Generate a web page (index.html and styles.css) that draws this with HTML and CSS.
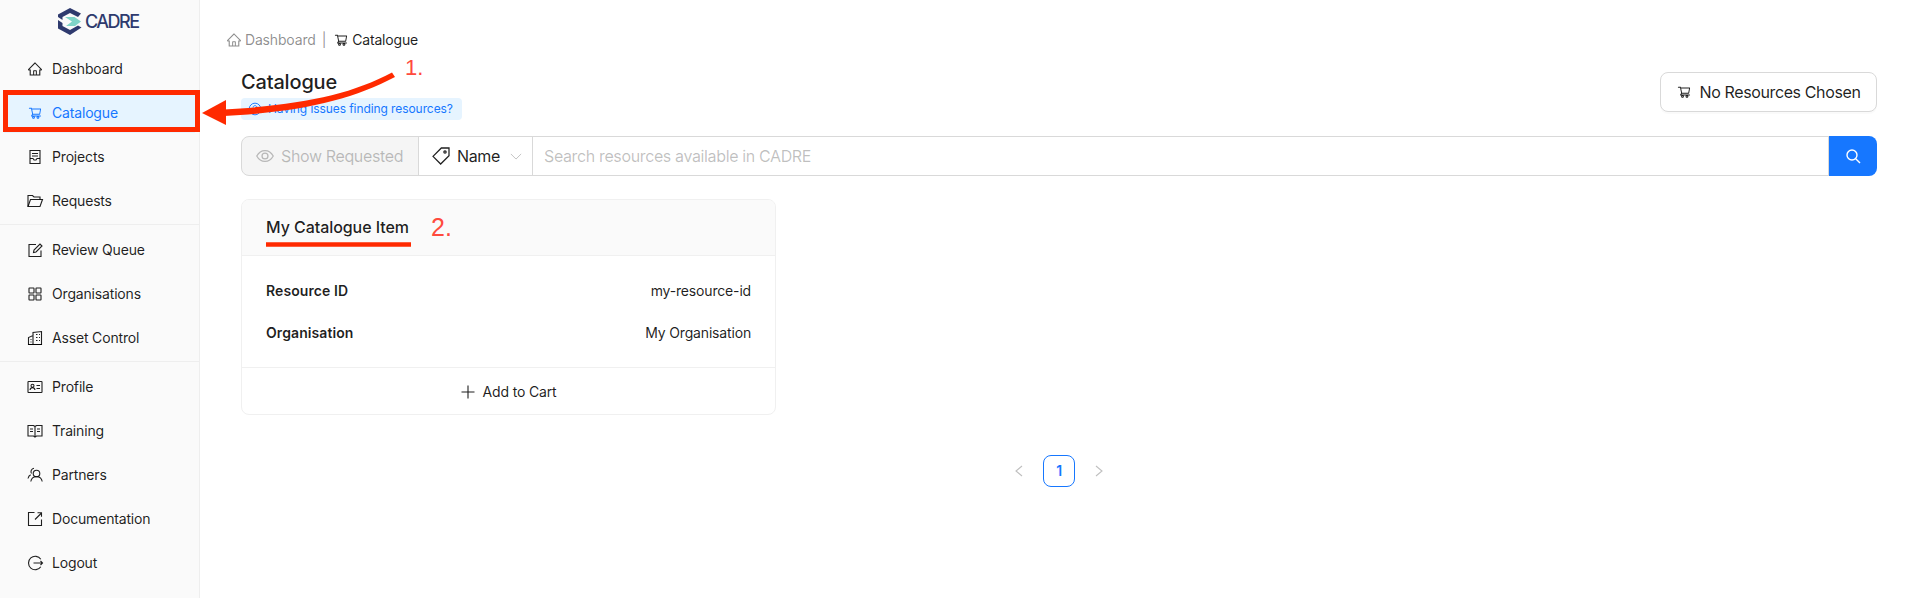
FILE: index.html
```html
<!DOCTYPE html>
<html lang="en">
<head>
<meta charset="utf-8">
<title>Catalogue - CADRE</title>
<link rel="stylesheet" href="styles.css">
</head>
<body>
<svg class="defs" width="0" height="0" aria-hidden="true">
  <symbol id="i-home" viewBox="58 58 908 908"><path fill="currentColor" d="M946.5 505L560.1 118.8l-25.9-25.9a31.5 31.5 0 0 0-44.4 0L77.5 505a63.9 63.9 0 0 0-18.8 46c.4 35.2 29.7 63.3 64.9 63.3h42.5V940h691.8V614.3h43.4c17.1 0 33.2-6.7 45.3-18.8a63.6 63.6 0 0 0 18.7-45.3c0-17-6.7-33.1-18.8-45.2zM568 868H456V664h112v204zm217.9-325.7V868H632V640c0-22.1-17.9-40-40-40H432c-22.1 0-40 17.9-40 40v228H238.1V542.3h-96l370-369.7 23.1 23.1L882 542.3h-96.1z"/></symbol>
  <symbol id="i-cart" viewBox="0 0 1024 1024"><path fill="currentColor" d="M922.9 701.9H327.4l29.9-60.9 496.8-.9c16.8 0 31.2-12 34.2-28.6l68.8-385.1c1.8-10.1-.9-20.5-7.5-28.4a34.99 34.99 0 0 0-26.6-12.5l-632-2.1-5.4-25.4c-3.4-16.2-18-28-34.6-28H96.5a35.3 35.3 0 1 0 0 70.6h125.9L246 312.8l58.1 281.3-74.8 122.1a34.96 34.96 0 0 0-3 36.8c6 11.9 18.1 19.4 31.5 19.4h62.8a102.43 102.43 0 0 0-20.6 61.7c0 56.6 46 102.6 102.6 102.6s102.6-46 102.6-102.6c0-22.3-7.4-44-20.6-61.7h161.1a102.43 102.43 0 0 0-20.6 61.7c0 56.6 46 102.6 102.6 102.6s102.6-46 102.6-102.6c0-22.3-7.4-44-20.6-61.7H923c19.4 0 35.3-15.8 35.3-35.3a35.42 35.42 0 0 0-35.4-35.2zM305.7 253l575.8 1.9-56.4 315.8-452.3.8L305.7 253zm96.9 612.7c-17.4 0-31.6-14.2-31.6-31.6 0-17.4 14.2-31.6 31.6-31.6s31.6 14.2 31.6 31.6a31.6 31.6 0 0 1-31.6 31.6zm325.1 0c-17.4 0-31.6-14.2-31.6-31.6 0-17.4 14.2-31.6 31.6-31.6s31.6 14.2 31.6 31.6a31.6 31.6 0 0 1-31.6 31.6z"/></symbol>
  <symbol id="i-project" viewBox="1 1 14 14"><g class="st"><path d="M3 1.500h10v13H3z"/><path d="M5 4.500h6M5 7h6M3 9.500h3l1 1.500h2l1-1.500h3"/></g></symbol>
  <symbol id="i-folder" viewBox="1 1 14 14"><g class="st"><path d="M1 13.500v-11h4.500l1.500 1.500h6v2.500"/><path d="M1 13.500l2.500-7H15.500L13 13.500z"/></g></symbol>
  <symbol id="i-edit" viewBox="1 1 14 14"><g class="st"><path d="M14 8.500v6H2v-12h7"/><path d="M6.500 10.500l.5-2.500 6-6 2 2-6 6z"/></g></symbol>
  <symbol id="i-grid" viewBox="1 1 14 14"><g class="st"><rect x="2" y="2" width="5" height="5" rx=".4"/><rect x="9" y="2" width="5" height="5" rx=".4"/><rect x="2" y="9" width="5" height="5" rx=".4"/><rect x="9" y="9" width="5" height="5" rx=".4"/></g></symbol>
  <symbol id="i-asset" viewBox="1 1 14 14"><g class="st"><path d="M1.500 14.500V7.500L6 5.500v9zM6 14.500V2.500l8.500-1v13z"/><path d="M1 14.500h14M3.500 9.500h1M3.500 12h1M9 4.500h1.500M12 4.500h1M9 7.500h1.500M12 7.500h1M9 10.500h1.500M12 10.500h1"/></g></symbol>
  <symbol id="i-profile" viewBox="1 1 14 14"><g class="st"><rect x="1" y="2.500" width="14" height="11" rx=".6"/><circle cx="5.500" cy="6.800" r="1.500"/><path d="M3 11c.3-1.600 1.200-2.400 2.500-2.400S7.700 9.400 8 11M9.500 6.500h3.500M9.500 9.500h3.500"/></g></symbol>
  <symbol id="i-book" viewBox="1 1 14 14"><g class="st"><path d="M1 2.500h5.500L8 3.500l1.500-1H15v10.500H9.500L8 14l-1.500-1H1zM8 3.500V14"/><path d="M3 6h3M3 8.500h3M10 6h3M10 8.500h3"/></g></symbol>
  <symbol id="i-partners" viewBox="1 1 14 14"><g class="st"><circle cx="9.500" cy="6.500" r="3.300"/><path d="M3.800 14.500c.5-3.200 2.700-4.800 5.700-4.800s5.200 1.600 5.700 4.800"/><path d="M4.500 6.500A3.400 3.400 0 0 1 7 1.300M1 11.500c.4-1.800 1.300-3 2.700-3.700"/></g></symbol>
  <symbol id="i-export" viewBox="1 1 14 14"><g class="st"><path d="M14.500 8.500v6h-13v-13h6"/><path d="M8 8.500L14 2.500M10.500 1.800h4v4"/></g></symbol>
  <symbol id="i-logout" viewBox="1 1 14 14"><g class="st"><path d="M13.800 4.300A6.700 6.700 0 1 0 13.800 11.700"/><path d="M6.500 8h9M13.500 6l2 2-2 2"/></g></symbol>
  <symbol id="i-help" viewBox="1 1 14 14"><g class="st"><circle cx="8" cy="8" r="6.800"/><path d="M5.800 6.200c0-1.300 1-2.100 2.200-2.100s2.200.8 2.200 2c0 1.900-2.200 1.700-2.200 3.500M8 11v1.100"/></g></symbol>
  <symbol id="i-eye" viewBox="1 1 14 14"><g class="st"><path d="M.8 8C2.500 4.800 5 3.200 8 3.200s5.500 1.600 7.200 4.800c-1.700 3.200-4.200 4.800-7.200 4.800S2.500 11.200.8 8z"/><circle cx="8" cy="8" r="2.600"/></g></symbol>
  <symbol id="i-tag" viewBox="1 1 14 14"><g class="st"><path d="M1 8.300L8.300 1H15v6.700L7.700 15z"/><circle cx="11.500" cy="4.500" r="1"/></g></symbol>
  <symbol id="i-down" viewBox="1 3 14 10"><path class="st" d="M2 5l6 6 6-6"/></symbol>
  <symbol id="i-search" viewBox="1 1 14 14"><g class="st st-heavy"><circle cx="7" cy="7" r="5"/><path d="M10.700 10.700L15 15"/></g></symbol>
  <symbol id="i-plus" viewBox="1 1 14 14"><path class="st" d="M8 1.500v13M1.500 8h13"/></symbol>
  <symbol id="i-left" viewBox="0 0 12 12"><path class="st" d="M9 1L3 6l6 5"/></symbol>
  <symbol id="i-right" viewBox="0 0 12 12"><path class="st" d="M3 1l6 5-6 5"/></symbol>
</svg>

<div class="app">
  <aside class="sidebar">
    <div class="brand">
      <svg class="brand-mark" viewBox="0 0 24 27">
        <path class="navy" d="M12 0L23 5.500 20 9 12 5 4.500 9v3L0 9V6.500z"/>
        <path class="navy" d="M0 12l4.500 3v3L12 22l8-4.500 3.500 2L12 27 0 20.500z"/>
        <path class="teal" d="M7 9h9.500L23 13.500 17 18H8l6-4.500z"/>
      </svg>
      <span class="brand-name">CADRE</span>
    </div>
    <nav class="menu">
      <div class="group">
        <a class="item"><svg class="ico"><use href="#i-home"/></svg>Dashboard</a>
        <a class="item item-active"><svg class="ico"><use href="#i-cart"/></svg>Catalogue</a>
        <a class="item"><svg class="ico"><use href="#i-project"/></svg>Projects</a>
        <a class="item"><svg class="ico"><use href="#i-folder"/></svg>Requests</a>
      </div>
      <div class="divider"></div>
      <div class="group">
        <a class="item"><svg class="ico"><use href="#i-edit"/></svg>Review Queue</a>
        <a class="item"><svg class="ico"><use href="#i-grid"/></svg>Organisations</a>
        <a class="item"><svg class="ico"><use href="#i-asset"/></svg>Asset Control</a>
      </div>
      <div class="divider"></div>
      <div class="group">
        <a class="item"><svg class="ico"><use href="#i-profile"/></svg>Profile</a>
        <a class="item"><svg class="ico"><use href="#i-book"/></svg>Training</a>
        <a class="item"><svg class="ico"><use href="#i-partners"/></svg>Partners</a>
        <a class="item"><svg class="ico"><use href="#i-export"/></svg>Documentation</a>
        <a class="item"><svg class="ico"><use href="#i-logout"/></svg>Logout</a>
      </div>
    </nav>
  </aside>

  <main class="main">
    <div class="crumbs">
      <span class="crumb crumb-muted"><svg class="ico"><use href="#i-home"/></svg>Dashboard</span>
      <span class="crumb-sep">|</span>
      <span class="crumb"><svg class="ico"><use href="#i-cart"/></svg>Catalogue</span>
    </div>
    <div class="content">
      <header class="head">
        <div class="head-left">
          <h1 class="title">Catalogue</h1>
          <span class="help"><svg class="ico ico-help"><use href="#i-help"/></svg>Having issues finding resources?</span>
        </div>
        <button class="cart-btn"><svg class="ico"><use href="#i-cart"/></svg>No Resources Chosen</button>
      </header>

      <div class="search">
        <div class="seg seg-show"><svg class="ico ico-lg"><use href="#i-eye"/></svg>Show Requested</div>
        <div class="seg seg-name"><svg class="ico ico-lg"><use href="#i-tag"/></svg>Name<svg class="ico ico-chev"><use href="#i-down"/></svg></div>
        <input class="seg-input" type="text" placeholder="Search resources available in CADRE">
        <button class="seg-go"><svg class="ico"><use href="#i-search"/></svg></button>
      </div>

      <article class="card">
        <div class="card-head">My Catalogue Item</div>
        <div class="card-body">
          <div class="row"><span class="row-key">Resource ID</span><span class="row-val">my-resource-id</span></div>
          <div class="row"><span class="row-key">Organisation</span><span class="row-val">My Organisation</span></div>
        </div>
        <div class="card-foot"><svg class="ico"><use href="#i-plus"/></svg>Add to Cart</div>
      </article>

      <div class="pager">
        <span class="pg pg-arrow"><svg class="ico-pg"><use href="#i-left"/></svg></span>
        <span class="pg pg-on">1</span>
        <span class="pg pg-arrow"><svg class="ico-pg"><use href="#i-right"/></svg></span>
      </div>
    </div>
  </main>
</div>

<svg class="marks" width="1919" height="598" viewBox="0 0 1919 598" aria-hidden="true">
  <rect class="mark-box" x="5.500" y="92.500" width="192" height="37"/>
  <path class="mark-head" d="M392 72.500C350 95 300 105 224 109.500V116C300 112 352 100 395 77z"/>
  <path class="mark-head" d="M202 113L226 100V125z"/>
  <path class="mark-under" d="M266 244.500H411"/>
</svg>
<span class="note note-1">1.</span>
<span class="note note-2">2.</span>
</body>
</html>
```
FILE: styles.css
```css
* { box-sizing: border-box; }
html, body { margin: 0; height: 100%; overflow: hidden; }
body {
  position: relative;
  background: #fff;
  color: rgba(0, 0, 0, .88);
  font-family: Inter, "Liberation Sans", sans-serif;
  font-size: 14px;
  line-height: 22px;
  letter-spacing: -.17px;
}
.defs { position: absolute; }
symbol { overflow: visible; }
.st { fill: none; stroke: currentColor; stroke-width: 1.1; }
.st-heavy { stroke-width: 1.4; }
.ico { width: 14px; height: 14px; flex: none; overflow: visible; }
.ico-lg { width: 16px; height: 16px; }

.app { display: flex; height: 598px; }

.sidebar {
  width: 200px;
  flex: none;
  background: #fafafa;
  border-right: 1px solid #eee;
}
.brand {
  height: 49px;
  padding: 8px 0 0 58px;
  display: flex;
  align-items: flex-start;
  gap: 3px;
}
.brand-mark { width: 24px; height: 27px; flex: none; }
.navy { fill: #2e3a6e; }
.teal { fill: #7fd4c8; }
.brand-name {
  color: #2e3a6e;
  font-size: 18px;
  line-height: 27px;
  letter-spacing: -1.5px;
  font-weight: 500;
}
.group { display: flex; flex-direction: column; gap: 4px; }
.divider { height: 1px; background: #eee; margin: 3px 0 5px; }
.item {
  height: 40px;
  margin: 0 4px;
  padding-left: 24px;
  display: flex;
  align-items: center;
  gap: 10px;
  color: rgba(0, 0, 0, .88);
}
.item-active { background: #e6f4ff; color: #1677ff; }

.main { flex: 1; min-width: 0; padding: 29px 28px 0 27px; }
.crumbs { display: flex; align-items: center; height: 22px; color: rgba(0, 0, 0, .88); }
.crumb { display: flex; align-items: center; gap: 4px; }
.crumb-muted { color: rgba(0, 0, 0, .45); }
.crumb-sep { margin: 0 8px 0 6px; color: rgba(0, 0, 0, .45); }
.content { padding: 0 0 0 14px; margin-right: 14px; }

.head { display: flex; justify-content: space-between; align-items: flex-start; margin-top: 17px; }
.head-left { display: flex; flex-direction: column; align-items: flex-start; }
.title { margin: 0; font-size: 20px; line-height: 28px; font-weight: 500; }
.help {
  margin-top: 2px;
  height: 22px;
  width: 221px;
  padding-left: 8px;
  display: flex;
  align-items: center;
  gap: 7px;
  background: #e6f4ff;
  border-radius: 4px;
  color: #1677ff;
  font-size: 12px;
  letter-spacing: -.08px;
}
.ico-help { width: 12px; height: 12px; }
.cart-btn {
  margin-top: 4px;
  width: 217px;
  height: 40px;
  display: flex;
  align-items: center;
  justify-content: center;
  gap: 9px;
  background: #fff;
  border: 1px solid #d9d9d9;
  border-radius: 8px;
  box-shadow: 0 2px 0 rgba(0, 0, 0, .02);
  color: rgba(0, 0, 0, .88);
  font: inherit;
  font-size: 16px;
  letter-spacing: -.38px;
}

.search { display: flex; height: 40px; margin-top: 16px; font-size: 16px; letter-spacing: -.37px; }
.seg { display: flex; align-items: center; height: 40px; border: 1px solid #d9d9d9; }
.seg-show {
  width: 178px;
  padding-left: 15px;
  gap: 8px;
  background: #f5f5f5;
  color: rgba(0, 0, 0, .25);
  border-radius: 8px 0 0 8px;
}
.seg-name { width: 115px; margin-left: -1px; padding-left: 14px; gap: 8px; }
.ico-chev { width: 12px; height: 9px; margin-left: 2px; color: rgba(0, 0, 0, .25); }
.seg-input {
  flex: 1;
  min-width: 0;
  height: 40px;
  margin-left: -1px;
  padding: 0 11px;
  border: 1px solid #d9d9d9;
  outline: 0;
  font: inherit;
  letter-spacing: inherit;
}
.seg-input::placeholder { color: rgba(0, 0, 0, .25); }
.seg-go {
  width: 48px;
  height: 40px;
  flex: none;
  display: flex;
  align-items: center;
  justify-content: center;
  background: #1677ff;
  border: 0;
  border-radius: 0 8px 8px 0;
  color: #fff;
}

.card {
  width: 535px;
  margin-top: 23px;
  border: 1px solid #f0f0f0;
  border-radius: 8px;
  overflow: hidden;
}
.card-head {
  height: 56px;
  padding: 0 0 2px 24px;
  display: flex;
  align-items: center;
  background: #fafafa;
  border-bottom: 1px solid #f0f0f0;
  font-size: 16px;
  font-weight: 500;
  letter-spacing: -.06px;
}
.card-body { padding: 24px 24px 23px; display: flex; flex-direction: column; gap: 20px; }
.row { display: flex; justify-content: space-between; }
.row-key { font-weight: 600; letter-spacing: .08px; }
.row-val { color: rgba(0, 0, 0, .88); }
.card-foot {
  height: 47px;
  padding-top: 2px;
  border-top: 1px solid #f0f0f0;
  display: flex;
  align-items: center;
  justify-content: center;
  gap: 8px;
}

.pager { display: flex; justify-content: center; gap: 8px; margin-top: 40px; }
.pg { width: 32px; height: 32px; display: flex; align-items: center; justify-content: center; }
.pg-arrow { color: rgba(0, 0, 0, .25); }
.ico-pg { width: 12px; height: 12px; }
.pg-on { border: 1px solid #1677ff; border-radius: 8px; color: #1677ff; font-weight: 600; }

.marks { position: absolute; left: 0; top: 0; pointer-events: none; }
.mark-box { fill: none; stroke: #ff2a00; stroke-width: 5; }
.mark-head { fill: #ff2a00; }
.mark-under { fill: none; stroke: #ff2a00; stroke-width: 4.500; }
.note {
  position: absolute;
  color: #ff4a3d;
  font-family: "Liberation Sans", sans-serif;
  letter-spacing: 0;
  line-height: 26px;
}
.note-1 { left: 405px; top: 55px; font-size: 22px; }
.note-2 { left: 431px; top: 214px; font-size: 25px; }
```
